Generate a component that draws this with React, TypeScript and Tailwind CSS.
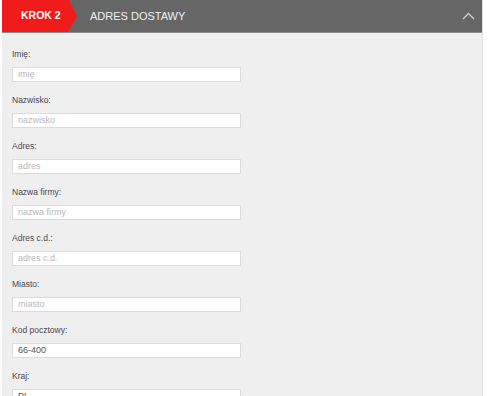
const fields = [
  { label: 'Imię:', placeholder: 'imię' },
  { label: 'Nazwisko:', placeholder: 'nazwisko' },
  { label: 'Adres:', placeholder: 'adres' },
  { label: 'Nazwa firmy:', placeholder: 'nazwa firmy' },
  { label: 'Adres c.d.:', placeholder: 'adres c.d.' },
  { label: 'Miasto:', placeholder: 'miasto' },
  { label: 'Kod pocztowy:', value: '66-400' },
  { label: 'Kraj:', value: 'PL' },
];

export default function App() {
  return (
    <div className="w-[488px] h-[396px] overflow-hidden bg-white pl-[2px] pr-[5px] font-['Liberation_Sans',Arial,sans-serif]">
      <div className="h-full bg-[#efefef] border-r border-[#e0e0e0]">
        {/* Header */}
        <div className="relative flex items-center h-[33px] bg-[#666666] border-b border-[#8c8c8c]">
          <div className="h-full w-[75px] bg-[#f01b1b] flex items-center pl-[19px] [clip-path:polygon(0_0,67px_0,75px_50%,66px_100%,0_100%)]">
            <span className="text-[10.5px] font-bold text-white">KROK 2</span>
          </div>
          <span className="ml-[13px] text-[11px] text-[#f0f0f0]">ADRES DOSTAWY</span>
          <svg className="absolute right-[7px] top-[12px]" width="13" height="8" viewBox="0 0 13 8" fill="none">
            <path d="M1 7 L6.5 1.5 L12 7" stroke="#cfcfcf" strokeWidth="1.3" />
          </svg>
        </div>

        {/* Form */}
        <div className="flex flex-col gap-[13px] pl-[10px] pt-[16px]">
          {fields.map((f) => (
            <div key={f.label} className="flex flex-col gap-[8px]">
              <label className="text-[8.5px] leading-[10px] text-[#4d4752]">{f.label}</label>
              <div className="w-[229px] h-[15px] bg-white border border-[#dcdcdc] flex items-center px-[5px]">
                {f.value ? (
                  <span className="text-[9px] text-[#555555]">{f.value}</span>
                ) : (
                  <span className="text-[9px] text-[#b8b8b8]">{f.placeholder}</span>
                )}
              </div>
            </div>
          ))}
        </div>
      </div>
    </div>
  );
}
